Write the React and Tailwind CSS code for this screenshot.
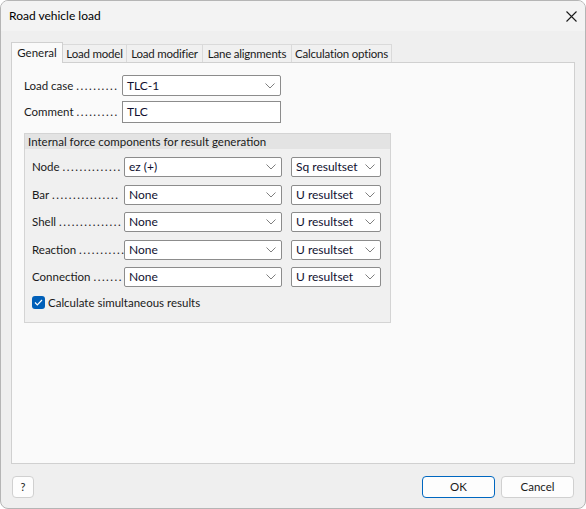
import React from "react";

const Chevron = () => (
  <svg width="10" height="6" viewBox="0 0 10 6" className="shrink-0">
    <path d="M0.5 0.5 L5 5 L9.5 0.5" fill="none" stroke="#707070" strokeWidth="0.9" />
  </svg>
);

const Select = ({ value, className }) => (
  <div
    className={`flex items-center justify-between bg-white border border-[#8c8c8c] rounded-[2px] pl-[4px] pr-[5px] ${className}`}
  >
    <span className="text-[#101030] text-[12px]">{value}</span>
    <Chevron />
  </div>
);

const Label = ({ text, dots, className }) => (
  <span className={`whitespace-nowrap ${className}`}>
    {text} <span className="tracking-[1.5px]">{dots}</span>
  </span>
);

const tabs = [
  { t: "General", w: "w-[52px]" },
  { t: "Load model", w: "w-[64px]" },
  { t: "Load modifier", w: "w-[76px]" },
  { t: "Lane alignments", w: "w-[89px]" },
  { t: "Calculation options", w: "w-[100px]" },
];

const rows = [
  { label: "Node", dots: "..............", value: "ez (+)", set: "Sq resultset" },
  { label: "Bar", dots: "................", value: "None", set: "U resultset" },
  { label: "Shell", dots: "...............", value: "None", set: "U resultset" },
  { label: "Reaction", dots: "...........", value: "None", set: "U resultset" },
  { label: "Connection", dots: ".......", value: "None", set: "U resultset" },
];

export default function App() {
  return (
    <div
      className="w-[586px] h-[509px] bg-[#efefef] border border-[#b5b5b5] rounded-[8px] overflow-hidden flex flex-col text-[11.5px] text-[#1a1a1a]"
      style={{ fontFamily: "Lato, 'Noto Sans', sans-serif" }}
    >
      {/* title bar */}
      <div className="h-[30px] bg-[#f3f3f3] flex items-center justify-between pl-[8px] pr-[8px] shrink-0">
        <span className="text-[12px] text-black">Road vehicle load</span>
        <svg width="11" height="11" viewBox="0 0 11 11">
          <path d="M0.5 0.5 L10.5 10.5 M10.5 0.5 L0.5 10.5" stroke="#1a1a1a" strokeWidth="1.1" />
        </svg>
      </div>

      {/* tabs */}
      <div className="pl-[10px] pr-[10px] pt-[11px] flex-1 flex flex-col">
        <div className="flex items-end h-[20px] relative z-10">
          {tabs.map((tab, i) =>
            i === 0 ? (
              <div
                key={tab.t}
                className={`${tab.w} h-[21px] flex items-center justify-center bg-[#fafafa] border border-[#d0d0d0] border-b-0 mb-[-1px]`}
              >
                {tab.t}
              </div>
            ) : (
              <div
                key={tab.t}
                className={`${tab.w} h-[18px] flex items-center justify-center whitespace-nowrap tracking-[-0.2px] bg-[#f0f0f0] border border-[#dadada] border-l-0 border-b-0`}
              >
                {tab.t}
              </div>
            )
          )}
        </div>
        <div className="h-[402px] bg-[#fafafa] border border-[#d0d0d0] pl-[12px] pt-[12px]">
          <div className="flex items-center h-[21px]">
            <Label text="Load case" dots=".........." className="w-[98px]" />
            <Select value="TLC-1" className="w-[159px] h-[21px]" />
          </div>
          <div className="flex items-center h-[22px] mt-[5px]">
            <Label text="Comment" dots=".........." className="w-[98px]" />
            <div className="w-[159px] h-[22px] bg-white border border-[#8c8c8c] pl-[4px] flex items-center text-[#101030] text-[12px]">
              TLC
            </div>
          </div>

          {/* group box */}
          <div className="mt-[10px] w-[367px] h-[190px] border border-[#d4d4d4] bg-[#f0f0f0] flex flex-col">
            <div className="h-[15px] bg-[#e3e3e3] pl-[3px] flex items-center leading-none">
              Internal force components for result generation
            </div>
            <div className="pl-[7px] pt-[8px] flex flex-col gap-[7.5px]">
              {rows.map((r) => (
                <div key={r.label} className="flex items-center h-[20px]">
                  <Label text={r.label} dots={r.dots} className="w-[92px]" />
                  <Select value={r.value} className="w-[158px] h-[20px]" />
                  <Select value={r.set} className="w-[90px] h-[20px] ml-[9px]" />
                </div>
              ))}
              <div className="flex items-center gap-[3px] -mt-[1px]">
                <div className="w-[13px] h-[13px] rounded-[3px] bg-[#005fb8] flex items-center justify-center">
                  <svg width="9" height="7" viewBox="0 0 9 7">
                    <path d="M1 3.5 L3.3 5.8 L8 1" fill="none" stroke="white" strokeWidth="1.2" />
                  </svg>
                </div>
                <span>Calculate simultaneous results</span>
              </div>
            </div>
          </div>
        </div>

        {/* footer */}
        <div className="flex items-center justify-between mt-[12px] pl-[1px] pr-[1px]">
          <div className="w-[22px] h-[22px] bg-[#fdfdfd] border border-[#d0d0d0] rounded-[4px] flex items-center justify-center text-[11px]">
            ?
          </div>
          <div className="flex gap-[6px]">
            <div className="w-[73px] h-[22px] bg-[#fdfdfd] border border-[#0067c0] rounded-[4px] flex items-center justify-center">
              OK
            </div>
            <div className="w-[73px] h-[22px] bg-[#fdfdfd] border border-[#d0d0d0] rounded-[4px] flex items-center justify-center">
              Cancel
            </div>
          </div>
        </div>
      </div>
    </div>
  );
}
